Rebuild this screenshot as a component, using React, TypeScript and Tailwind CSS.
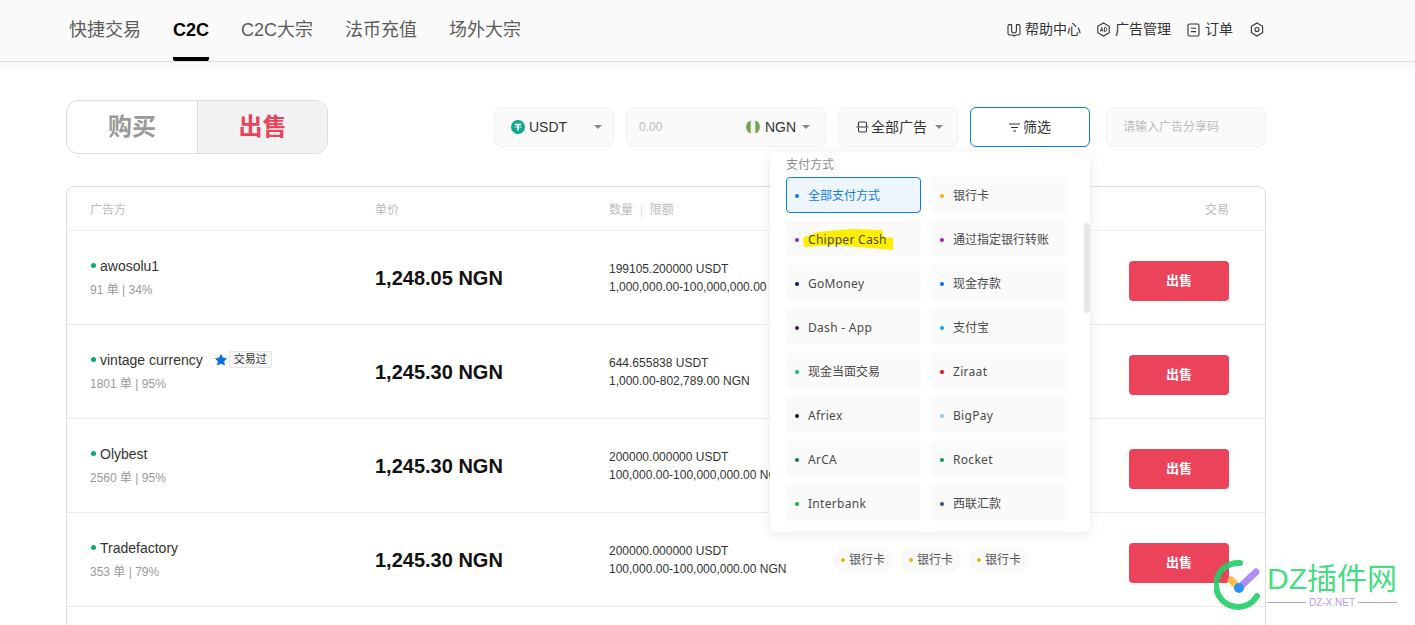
import React from "react";

const navItems = ["快捷交易", "C2C", "C2C大宗", "法币充值", "场外大宗"];

const payments = [
  { name: "全部支付方式", dot: "bg-[#0d7be0]", active: true },
  { name: "银行卡", dot: "bg-[#f5ae0f]" },
  { name: "Chipper Cash", dot: "bg-[#7b35c4]", latin: true, marked: true },
  { name: "通过指定银行转账", dot: "bg-[#a814c9]" },
  { name: "GoMoney", dot: "bg-[#0c1a5c]", latin: true },
  { name: "现金存款", dot: "bg-[#0a6fe0]" },
  { name: "Dash - App", dot: "bg-[#4a1650]", latin: true },
  { name: "支付宝", dot: "bg-[#0aa5f0]" },
  { name: "现金当面交易", dot: "bg-[#0bbf77]" },
  { name: "Ziraat", dot: "bg-[#e30b0b]", latin: true },
  { name: "Afriex", dot: "bg-[#111111]", latin: true },
  { name: "BigPay", dot: "bg-[#7fcbe0]", latin: true },
  { name: "ArCA", dot: "bg-[#0a7a4a]", latin: true },
  { name: "Rocket", dot: "bg-[#0e9a4a]", latin: true },
  { name: "Interbank", dot: "bg-[#04ba3a]", latin: true },
  { name: "西联汇款", dot: "bg-[#33507f]" },
  { name: "", dot: "" },
  { name: "", dot: "" },
];

const rows = [
  { name: "awosolu1", stats: "91 单 | 34%", price: "1,248.05 NGN", qty: "199105.200000 USDT", limit: "1,000,000.00-100,000,000.00 NGN" },
  { name: "vintage currency", stats: "1801 单 | 95%", price: "1,245.30 NGN", qty: "644.655838 USDT", limit: "1,000.00-802,789.00 NGN", traded: true },
  { name: "Olybest", stats: "2560 单 | 95%", price: "1,245.30 NGN", qty: "200000.000000 USDT", limit: "100,000.00-100,000,000.00 NGN" },
  { name: "Tradefactory", stats: "353 单 | 79%", price: "1,245.30 NGN", qty: "200000.000000 USDT", limit: "100,000.00-100,000,000.00 NGN" },
];

const Caret = () => <span className="w-0 h-0 border-x-[4px] border-x-transparent border-t-[4px] border-t-[#888]" />;

const HelpIcon = () => (
  <svg width="14" height="14" viewBox="0 0 14 14" fill="none" stroke="#333" strokeWidth="1.1">
    <path d="M4.6 1.6H2.6C1.7 1.6 1 2.3 1 3.2V10.4C1 11.3 1.7 12 2.6 12H4.4C5.4 12 6.3 12.4 7 13C7.7 12.4 8.6 12 9.6 12H11.4C12.3 12 13 11.3 13 10.4V3.2C13 2.3 12.3 1.6 11.4 1.6H9.4" />
    <path d="M4.6 1.2V7.6C4.6 9 5.6 10 7 10C8.4 10 9.4 9 9.4 7.6V1.2" />
  </svg>
);

const AdIcon = () => (
  <svg width="15" height="15" viewBox="0 0 15 15" fill="none" stroke="#333" strokeWidth="1.1">
    <path d="M7.5 1L13.2 4.2V10.8L7.5 14L1.8 10.8V4.2Z" />
    <path d="M4.4 9.6L5.7 5.4L7 9.6M4.8 8.4H6.6M8.5 5.4V9.6H9.4C11.2 9.6 11.2 5.4 9.4 5.4Z" strokeWidth="0.9" />
  </svg>
);

const OrderIcon = () => (
  <svg width="13" height="14" viewBox="0 0 13 14" fill="none" stroke="#333" strokeWidth="1.1">
    <rect x="1" y="1" width="11" height="12" rx="1.5" />
    <path d="M4 5.2H9M4 8.6H9" />
  </svg>
);

const SettingsIcon = () => (
  <svg width="14" height="15" viewBox="0 0 14 15" fill="none" stroke="#333" strokeWidth="1.1">
    <path d="M7 1L12.6 4.2V10.8L7 14L1.4 10.8V4.2Z" />
    <circle cx="7" cy="7.5" r="2" />
  </svg>
);

const TetherIcon = () => (
  <svg width="14" height="14" viewBox="0 0 14 14">
    <circle cx="7" cy="7" r="7" fill="#0eaa8b" />
    <path d="M3.8 3.8H10.2V5.2H7.8V10.6H6.2V5.2H3.8Z" fill="#fff" />
    <path d="M3.4 6.6H10.6V7.4H3.4Z" fill="#fff" />
  </svg>
);

const FlagIcon = () => (
  <svg width="14" height="14" viewBox="0 0 14 14">
    <circle cx="7" cy="7" r="7" fill="#f2f2f2" />
    <path d="M4.6 0.5A7 7 0 0 0 4.6 13.5ZM9.4 0.5A7 7 0 0 1 9.4 13.5Z" fill="#6fa544" />
  </svg>
);

const BoxIcon = () => (
  <svg width="13" height="12" viewBox="0 0 13 12" fill="none" stroke="#333" strokeWidth="1.1">
    <path d="M2.5 5.5V2.4C2.5 1.6 3 1 3.8 1H9.2C10 1 10.5 1.6 10.5 2.4V5.5M2.5 7V9.6C2.5 10.4 3 11 3.8 11H9.2C10 11 10.5 10.4 10.5 9.6V7M0.5 6H12.5" />
  </svg>
);

const FilterIcon = () => (
  <svg width="11" height="9" viewBox="0 0 11 9" fill="none" stroke="#333" strokeWidth="1.1">
    <path d="M0 1H11M2 4.5H9M4 8H7" />
  </svg>
);

const StarIcon = () => (
  <svg width="12" height="12" viewBox="0 0 12 12" fill="#0d6fe0">
    <path d="M6 .5L7.7 3.9L11.5 4.5L8.8 7.2L9.4 11L6 9.2L2.6 11L3.2 7.2L.5 4.5L4.3 3.9Z" strokeLinejoin="round" stroke="#0d6fe0" strokeWidth="0.8" />
  </svg>
);

const PayTag = () => (
  <span className="flex items-center gap-[4px] h-[24px] w-[60px] justify-center rounded-full bg-[#f9f9f9] text-[12px] text-[#555]">
    <span className="w-[4px] h-[4px] rounded-full bg-[#f5ae0f]" />
    银行卡
  </span>
);

const FilterDropdown = () => (
  <div className="absolute z-20 right-0 top-[45px] w-[320px] h-[380px] overflow-hidden rounded-[6px] bg-white shadow-[0_2px_12px_rgba(30,40,90,0.1)] pl-[16px] font-['Liberation_Sans','Noto_Sans_CJK_SC',sans-serif]">
    <div className="h-[25px] pt-[1px] text-[12px] leading-[24px] text-[#8c8c8c]">支付方式</div>
    <div className="grid grid-cols-[135px_136px] gap-x-[10px] gap-y-[8px]">
      {payments.map((p, i) => (
        <div
          key={i}
          className={
            p.active
              ? "relative flex items-center h-[36px] pl-[8px] pt-[2px] rounded-[4px] border border-[#0d7be0] bg-[#edf5fd] text-[12px] text-[#0d7be0]"
              : "relative flex items-center h-[36px] pl-[9px] pt-[2px] rounded-[4px] bg-[#fafafa] text-[12px] text-[#4a4a4a]"
          }
        >
          {p.dot && <span className={`w-[4px] h-[4px] rounded-full mr-[9px] ${p.dot}`} />}
          {p.marked && (
            <svg className="absolute left-[17px] top-[8px]" width="90" height="21" viewBox="0 0 90 21">
              <path d="M0 9L14 3L48 0L79 1L81 8L90 9V21L32 16L1 18Z" fill="#ffee00" />
            </svg>
          )}
          <span className={p.latin ? "relative font-['Noto_Sans',sans-serif] tracking-[0.3px]" : "relative"}>{p.name}</span>
        </div>
      ))}
    </div>
    <div className="absolute right-0 top-[71px] w-[6px] h-[90px] rounded-full bg-[#e6e7ea]" />
  </div>
);

const App = () => {
  return (
    <div className="h-[625px] overflow-hidden bg-white font-['Liberation_Sans','Noto_Sans_CJK_SC',sans-serif]">
      {/* Top nav */}
      <div className="h-[68px] bg-[#fafafa]">
        <div className="flex items-center justify-between h-[62px] border-b border-[#dedede] pl-[69px] pr-[151px]">
          <div className="flex h-full gap-[32px]">
            {navItems.map((item) => (
              <div
                key={item}
                className={
                  item === "C2C"
                    ? "flex items-center h-full border-b-[4px] border-black rounded-b-[2px] pt-[4px] text-[18px] font-bold text-black"
                    : "flex items-center h-full text-[18px] text-[#5c5c5c]"
                }
              >
                {item}
              </div>
            ))}
          </div>
          <div className="flex items-center pb-[2px] text-[14px] text-[#333]">
            <span className="flex items-center gap-[4px] mr-[15px]">
              <HelpIcon />
              帮助中心
            </span>
            <span className="flex items-center gap-[4px] mr-[16px]">
              <AdIcon />
              广告管理
            </span>
            <span className="flex items-center gap-[5px] mr-[17px]">
              <OrderIcon />
              订单
            </span>
            <SettingsIcon />
          </div>
        </div>
      </div>

      <div className="w-[1200px] ml-[66px]">
        {/* Buy / sell and filters */}
        <div className="flex items-center justify-between mt-[32px] h-[54px]">
          <div className="flex w-[262px] h-[54px] rounded-[12px] border border-[#dcdcdc] overflow-hidden text-[24px] font-bold">
            <div className="flex-1 flex items-center justify-center text-[#999]">购买</div>
            <div className="w-[130px] flex items-center justify-center border-l border-[#dcdcdc] bg-[#f2f2f2] text-[#ea435a]">出售</div>
          </div>
          <div className="flex items-center text-[14px] text-[#333]">
            <div className="flex items-center w-[120px] h-[40px] pl-[16px] pr-[11px] rounded-[8px] border border-[#f2f2f2] bg-[#fafafa]">
              <TetherIcon />
              <span className="ml-[4px] flex-1">USDT</span>
              <Caret />
            </div>
            <div className="flex items-center w-[200px] h-[40px] ml-[12px] pl-[12px] pr-[15px] rounded-[8px] border border-[#f2f2f2] bg-[#fafafa]">
              <span className="flex-1 text-[12px] text-[#bdbdbd]">0.00</span>
              <FlagIcon />
              <span className="ml-[5px] mr-[6px]">NGN</span>
              <Caret />
            </div>
            <div className="flex items-center gap-[2px] w-[120px] h-[40px] ml-[12px] pl-[17px] rounded-[8px] border border-[#f2f2f2] bg-[#fafafa]">
              <BoxIcon />
              <span className="mr-[6px]">全部广告</span>
              <Caret />
            </div>
            <div className="relative ml-[12px]">
              <div className="flex items-center justify-center gap-[3px] w-[120px] h-[40px] rounded-[6px] border border-[#0d7be0] bg-white">
                <FilterIcon />
                筛选
              </div>
              <FilterDropdown />
            </div>
            <div className="flex items-center w-[160px] h-[40px] ml-[16px] pl-[16px] rounded-[8px] border border-[#f2f2f2] bg-[#fafafa] text-[12px] text-[#bdbdbd]">
              请输入广告分享码
            </div>
          </div>
        </div>

        {/* Ads table */}
        <div className="mt-[32px] h-[500px] rounded-t-[8px] border border-[#dedede]">
          <div className="flex items-center h-[44px] pt-[2px] pl-[23px] pr-[36px] border-b border-[#eef0f5] text-[12px] text-[#bbb]">
            <span className="w-[285px]">广告方</span>
            <span className="w-[234px]">单价</span>
            <span className="flex-1">
              数量 <span className="mx-[3.5px] text-[#ddd]">|</span> 限额
            </span>
            <span>交易</span>
          </div>
          {rows.map((row) => (
            <div key={row.name} className="flex items-center h-[94px] pl-[23px] pr-[36px] border-b border-[#e9ebf2]">
              <div className="w-[285px]">
                <div className="flex items-center text-[14px] leading-[18px] text-[#333]">
                  <span className="w-[5px] h-[5px] ml-[1px] mr-[4px] rounded-full bg-[#0aa77c]" />
                  {row.name}
                  {row.traded && (
                    <span className="flex items-center ml-[12px]">
                      <StarIcon />
                      <span className="ml-[2px] px-[4px] h-[17px] leading-[15px] rounded-[2px] border border-[#e6e6e6] bg-[#f7f7f7] text-[11px] text-[#333]">交易过</span>
                    </span>
                  )}
                </div>
                <div className="mt-[6px] text-[12px] leading-[18px] text-[#999]">{row.stats}</div>
              </div>
              <div className="w-[234px] text-[20px] font-bold text-[#111]">{row.price}</div>
              <div className="w-[224px] text-[12px] leading-[18px] text-[#333] whitespace-nowrap">
                <div>{row.qty}</div>
                <div>{row.limit}</div>
              </div>
              <div className="flex flex-1 gap-[8px]">
                <PayTag />
                <PayTag />
                <PayTag />
              </div>
              <div className="flex items-center justify-center w-[100px] h-[40px] mt-[6px] rounded-[4px] bg-[#ea435a] text-[13px] font-bold text-white">出售</div>
            </div>
          ))}
        </div>
      </div>

      {/* Watermark */}
      <div className="absolute z-30 left-[1214px] top-[559px] flex items-center">
        <svg width="50" height="52" viewBox="0 0 50 52" fill="none" strokeLinecap="round" className="opacity-90">
          <path d="M26 4A22 22 0 1 0 43 37" stroke="#22cf68" strokeWidth="6" />
          <path d="M17 21L25 29" stroke="#fbb83a" strokeWidth="7" />
          <path d="M25 29L42 13" stroke="#a582f7" strokeWidth="7" />
          <circle cx="25" cy="29" r="5" fill="#1685f5" />
        </svg>
        <div className="ml-[3px] w-[130px]">
          <div className="text-[30px] leading-[32px] whitespace-nowrap text-[#46dc84]">DZ插件网</div>
          <div className="flex items-center mt-[3px] text-[10px] leading-[10px] text-[#b39cf5]">
            <span className="flex-1 h-px bg-[#b39cf5]" />
            <span className="mx-[3px]">DZ-X.NET</span>
            <span className="flex-1 h-px bg-[#b39cf5]" />
          </div>
        </div>
      </div>
    </div>
  );
};

export default App;
